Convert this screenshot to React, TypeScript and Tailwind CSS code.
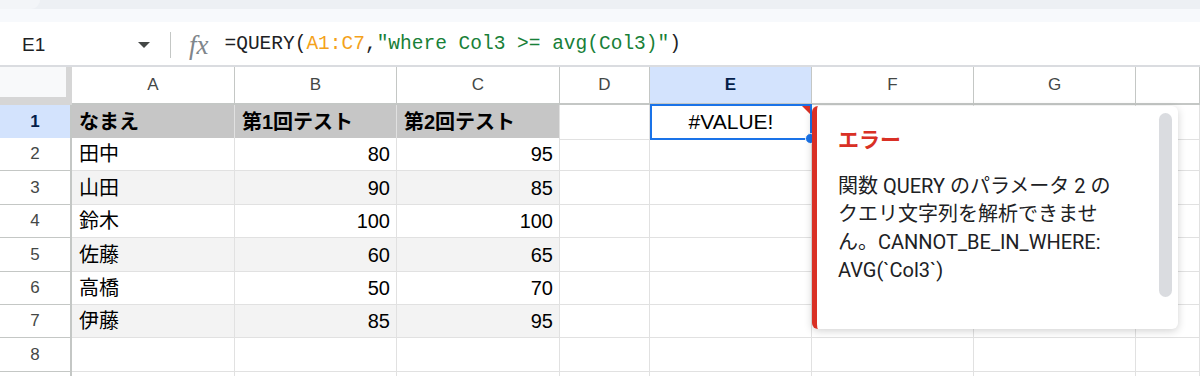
import React from "react";

const FONT = "font-['Liberation_Sans','Noto_Sans_CJK_JP',sans-serif]";

const COLS = ["A", "B", "C", "D", "E", "F", "G", ""];

const ROWS = [
  { n: 1, h: "h-[33px]", cells: ["なまえ", "第1回テスト", "第2回テスト"], head: true },
  { n: 2, h: "h-[33px]", cells: ["田中", "80", "95"] },
  { n: 3, h: "h-[34px]", cells: ["山田", "90", "85"], alt: true },
  { n: 4, h: "h-[33px]", cells: ["鈴木", "100", "100"] },
  { n: 5, h: "h-[34px]", cells: ["佐藤", "60", "65"], alt: true },
  { n: 6, h: "h-[33px]", cells: ["高橋", "50", "70"] },
  { n: 7, h: "h-[33px]", cells: ["伊藤", "85", "95"], alt: true },
  { n: 8, h: "h-[34px]", cells: ["", "", ""] },
  { n: 0, h: "h-[34px]", cells: ["", "", ""] },
];

const GRID = "grid grid-cols-[72px_163px_162px_163px_90px_162px_162px_162px_1fr]";

function FormulaBar() {
  return (
    <div className="flex items-center h-[45px] pt-[3px] bg-white border-b-2 border-[#dadce0]">
      <div className="w-[170px] flex items-center justify-between pl-[22px] pr-[20px]">
        <span className="text-[19px] text-[#202124]">E1</span>
        <svg width="12" height="6" viewBox="0 0 12 6">
          <path d="M0 0h12L6 6z" fill="#444746" />
        </svg>
      </div>
      <div className="w-px h-[26px] bg-[#c4c7c5]" />
      <span className="ml-[18px] mr-[16px] text-[27px] italic text-[#80868b] font-['Liberation_Serif',serif] leading-none">
        fx
      </span>
      <span className="font-['Liberation_Mono',monospace] text-[19.5px] text-[#202124] whitespace-pre">
        =QUERY(<span className="text-[#f4a21b]">A1:C7</span>,
        <span className="text-[#188038]">"where Col3 &gt;= avg(Col3)"</span>)
      </span>
    </div>
  );
}

function ErrorPopup() {
  return (
    <div className="absolute left-[812px] top-[106px] w-[366px] h-[223px] bg-white rounded-[6px] border-l-[5px] border-[#d93025] shadow-[0_2px_8px_rgba(0,0,0,0.18)] flex">
      <div className="flex-1 pl-[21px] pt-[19px] font-['Roboto','Noto_Sans_CJK_JP',sans-serif] text-[#202124]">
        <p className="text-[21px] font-bold text-[#d93025] leading-[30px]">エラー</p>
        <p className="mt-[17px] text-[20px] leading-[28px] whitespace-nowrap">
          関数 QUERY のパラメータ 2 の
          <br />
          クエリ文字列を解析できませ
          <br />
          ん。CANNOT_BE_IN_WHERE:
          <br />
          AVG(`Col3`)
        </p>
      </div>
      <div className="w-[13px] h-[184px] mt-[7px] mr-[6px] rounded-full bg-[#dadce0]" />
    </div>
  );
}

export default function App() {
  return (
    <div className={`w-[1200px] h-[376px] overflow-hidden bg-white ${FONT}`}>
      {/* top chrome */}
      <div className="h-[9px] bg-[#edf0f4] flex">
        <div className="w-[40px] bg-[#f3f5f8] rounded-br-[10px]" />
      </div>
      <div className="h-[13px] bg-[#f7f9fc]" />
      <FormulaBar />

      <div className="relative">
        {/* column headers */}
        <div className={`${GRID} h-[38px]`}>
          <div className="bg-[#f8f9fa] border-r-[6px] border-b-[8px] border-[#d6d6d6]" />
          {COLS.map((c, i) => (
            <div
              key={i}
              className={`flex items-center justify-center text-[17px] border-r border-b-2 border-[#c4c7c5] ${
                c === "E" ? "bg-[#d3e3fd] font-bold text-[#041e49]" : "bg-white text-[#444746]"
              }`}
            >
              {c}
            </div>
          ))}
        </div>

        {/* rows */}
        {ROWS.map((r, ri) => (
          <div key={ri} className={`${GRID} ${r.h}`}>
            <div
              className={`flex items-center justify-center text-[17px] border-r-2 border-b border-[#c4c7c5] ${
                r.head ? "bg-[#d3e3fd] font-bold text-[#041e49]" : "bg-white text-[#444746]"
              }`}
            >
              {r.n || ""}
            </div>
            {r.cells.map((v, i) => (
              <div
                key={i}
                className={`flex items-center text-[20px] text-black border-r border-b border-[#e1e1e1] ${
                  i === 0 || r.head ? "justify-start pl-[7px]" : "justify-end pr-[6px]"
                } ${r.head ? "bg-[#c6c6c6] font-bold" : r.alt ? "bg-[#f3f3f3]" : "bg-white"}`}
              >
                {v}
              </div>
            ))}
            {/* D */}
            <div className="border-r border-b border-[#e1e1e1]" />
            {/* E */}
            {r.n === 1 ? (
              <div className="relative flex items-center justify-center text-[21px] text-black border-2 border-[#1a73e8] -mt-px">
                #VALUE!
                <div className="absolute right-0 top-0 w-0 h-0 border-t-[8px] border-l-[8px] border-t-[#d93025] border-l-transparent" />
                <div className="absolute -right-[6px] -bottom-[6px] w-[11px] h-[11px] rounded-full bg-[#1a73e8] border border-white" />
              </div>
            ) : (
              <div className="border-r border-b border-[#e1e1e1]" />
            )}
            <div className="border-r border-b border-[#e1e1e1]" />
            <div className="border-r border-b border-[#e1e1e1]" />
            <div className="border-r border-b border-[#e1e1e1]" />
          </div>
        ))}

        <div className="absolute left-0 top-0 w-full h-full pointer-events-none">
          <div className="relative w-full h-full -top-[67px]">
            <ErrorPopup />
          </div>
        </div>
      </div>
    </div>
  );
}
